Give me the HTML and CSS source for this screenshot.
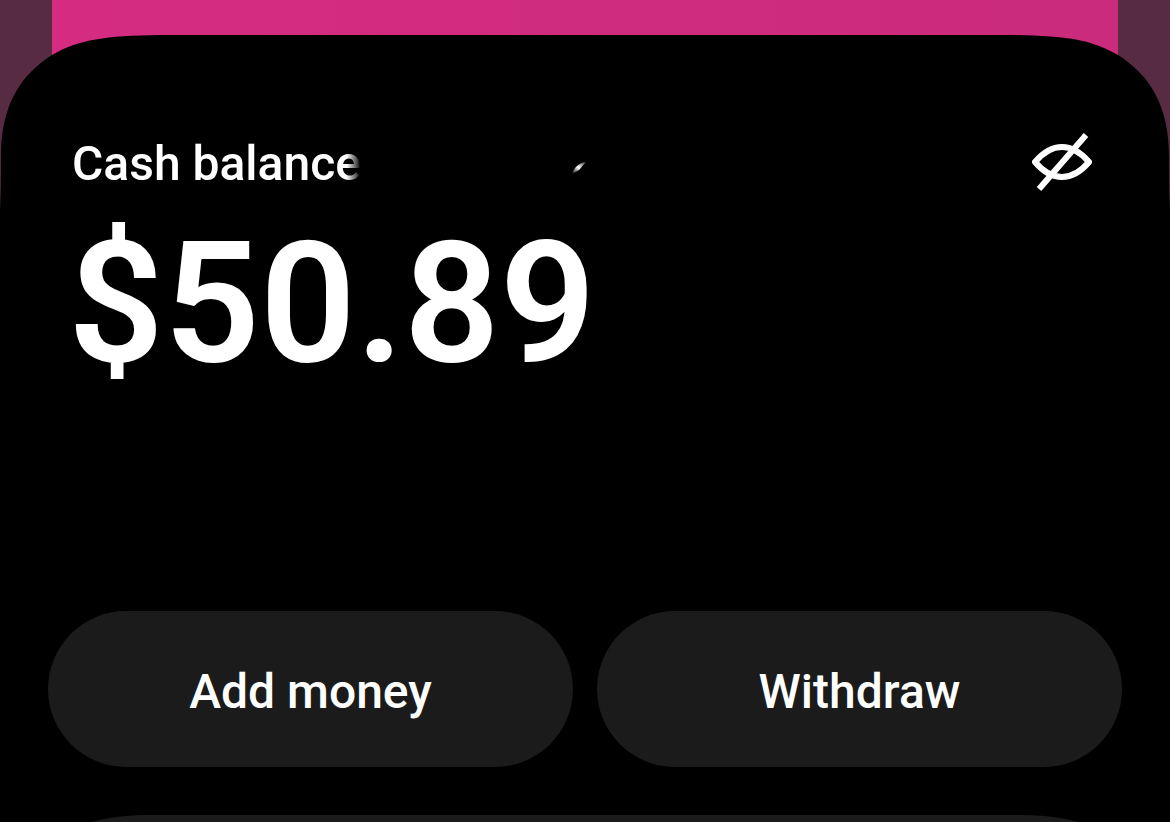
FILE: index.html
```html
<!DOCTYPE html>
<html lang="en">
<head>
  <meta charset="UTF-8">
  <title>Cash balance</title>
  <meta name="viewport" content="width=device-width, initial-scale=1.0">
  <link rel="stylesheet" href="styles.css">
</head>
<body>
  <div class="backdrop"></div>

  <main class="sheet">
    <!-- smooth corners -->
    <svg class="corner corner-left" viewBox="0 0 160 175" aria-hidden="true">
      <path fill="#572b42" d="M0 0H52V20C21 40 1 69 1 122Q1 155 0 175Z"/>
      <path fill="#d52c82" d="M52 0H160C105 1 80 4 52 20Z"/>
    </svg>
    <svg class="corner corner-right" viewBox="0 0 160 175" aria-hidden="true">
      <path fill="#572b42" d="M160 0H108V20C139 40 159 69 159 122Q159 155 160 175Z"/>
      <path fill="#ca2b7b" d="M108 0H0C55 1 80 4 108 20Z"/>
    </svg>

    <header class="balance-header">
      <h1 class="label">Cash balance</h1>
      <svg class="chevron" viewBox="0 0 16 14" aria-hidden="true">
        <defs>
          <linearGradient id="fade" x1="0" y1="1" x2="1" y2="0">
            <stop offset="0" stop-color="#fff" stop-opacity="0"/>
            <stop offset=".5" stop-color="#fff"/>
            <stop offset="1" stop-color="#fff" stop-opacity=".2"/>
          </linearGradient>
        </defs>
        <path fill="url(#fade)" d="M1 13C3 7 7 2 15 1L8 9Z"/>
      </svg>
      <button class="toggle" aria-label="Hide balance">
        <svg viewBox="0 0 60 60" fill="none" stroke="#fff" aria-hidden="true">
          <path stroke-width="6" stroke-linejoin="round" d="M3 30C20 10 40 10 57 30C40 50 20 50 3 30Z"/>
          <path stroke-width="6" d="M7 57L54 3"/>
        </svg>
      </button>
    </header>

    <p class="amount">$50.89</p>

    <div class="actions">
      <button class="action">Add money</button>
      <button class="action">Withdraw</button>
    </div>

    <section class="next-card"></section>
  </main>
</body>
</html>
```
FILE: styles.css
```css
* { box-sizing: border-box; }
body { display: flex; flex-direction: column; margin: 0; height: 100vh; overflow: hidden; background: #000; color: #fff; font-family: Roboto, Arial, sans-serif; font-weight: 500; }
.backdrop { flex: none; height: 35px; border: solid #572b42; border-width: 0 52px; background: linear-gradient(to right, #d52c82, #ca2b7b); }
.sheet { position: relative; flex: 1; min-height: 0; padding: 97px 48px 0; overflow: hidden; background: #000; }

.corner { position: absolute; top: 0; width: 160px; height: 175px; }
.corner-left { left: 0; }
.corner-right { right: 0; }

.balance-header { display: flex; align-items: flex-start; height: 60px; padding: 0 28px 0 24px; }
.label { margin: 4px 0 0; font-size: 48px; line-height: 56px; font-weight: 500; -webkit-mask-image: linear-gradient(to right, #000 95%, transparent); mask-image: linear-gradient(to right, #000 95%, transparent); }
.chevron { width: 16px; height: 14px; margin: 29px 0 0 210px; }
.toggle { width: 64px; height: 60px; margin-left: auto; padding: 0 2px; border: none; background: none; cursor: pointer; }
.toggle svg { display: block; width: 60px; height: 60px; }

.amount { margin: 28px 0 0; padding: 0 20px; font-size: 168px; line-height: 168px; font-weight: 600; }

.actions { display: grid; grid-template-columns: 1fr 1fr; gap: 24px; margin-top: 223px; }
.action { height: 156px; padding: 4px 0 0; border: none; border-radius: 78px; background: #1b1b1b; color: #fff; font: inherit; font-size: 48px; cursor: pointer; }
.action:hover { background: #222; }

.next-card { height: 200px; margin-top: 48px; border-radius: 100px 100px 0 0 / 40px 40px 0 0; background: #1b1b1b; }
```
